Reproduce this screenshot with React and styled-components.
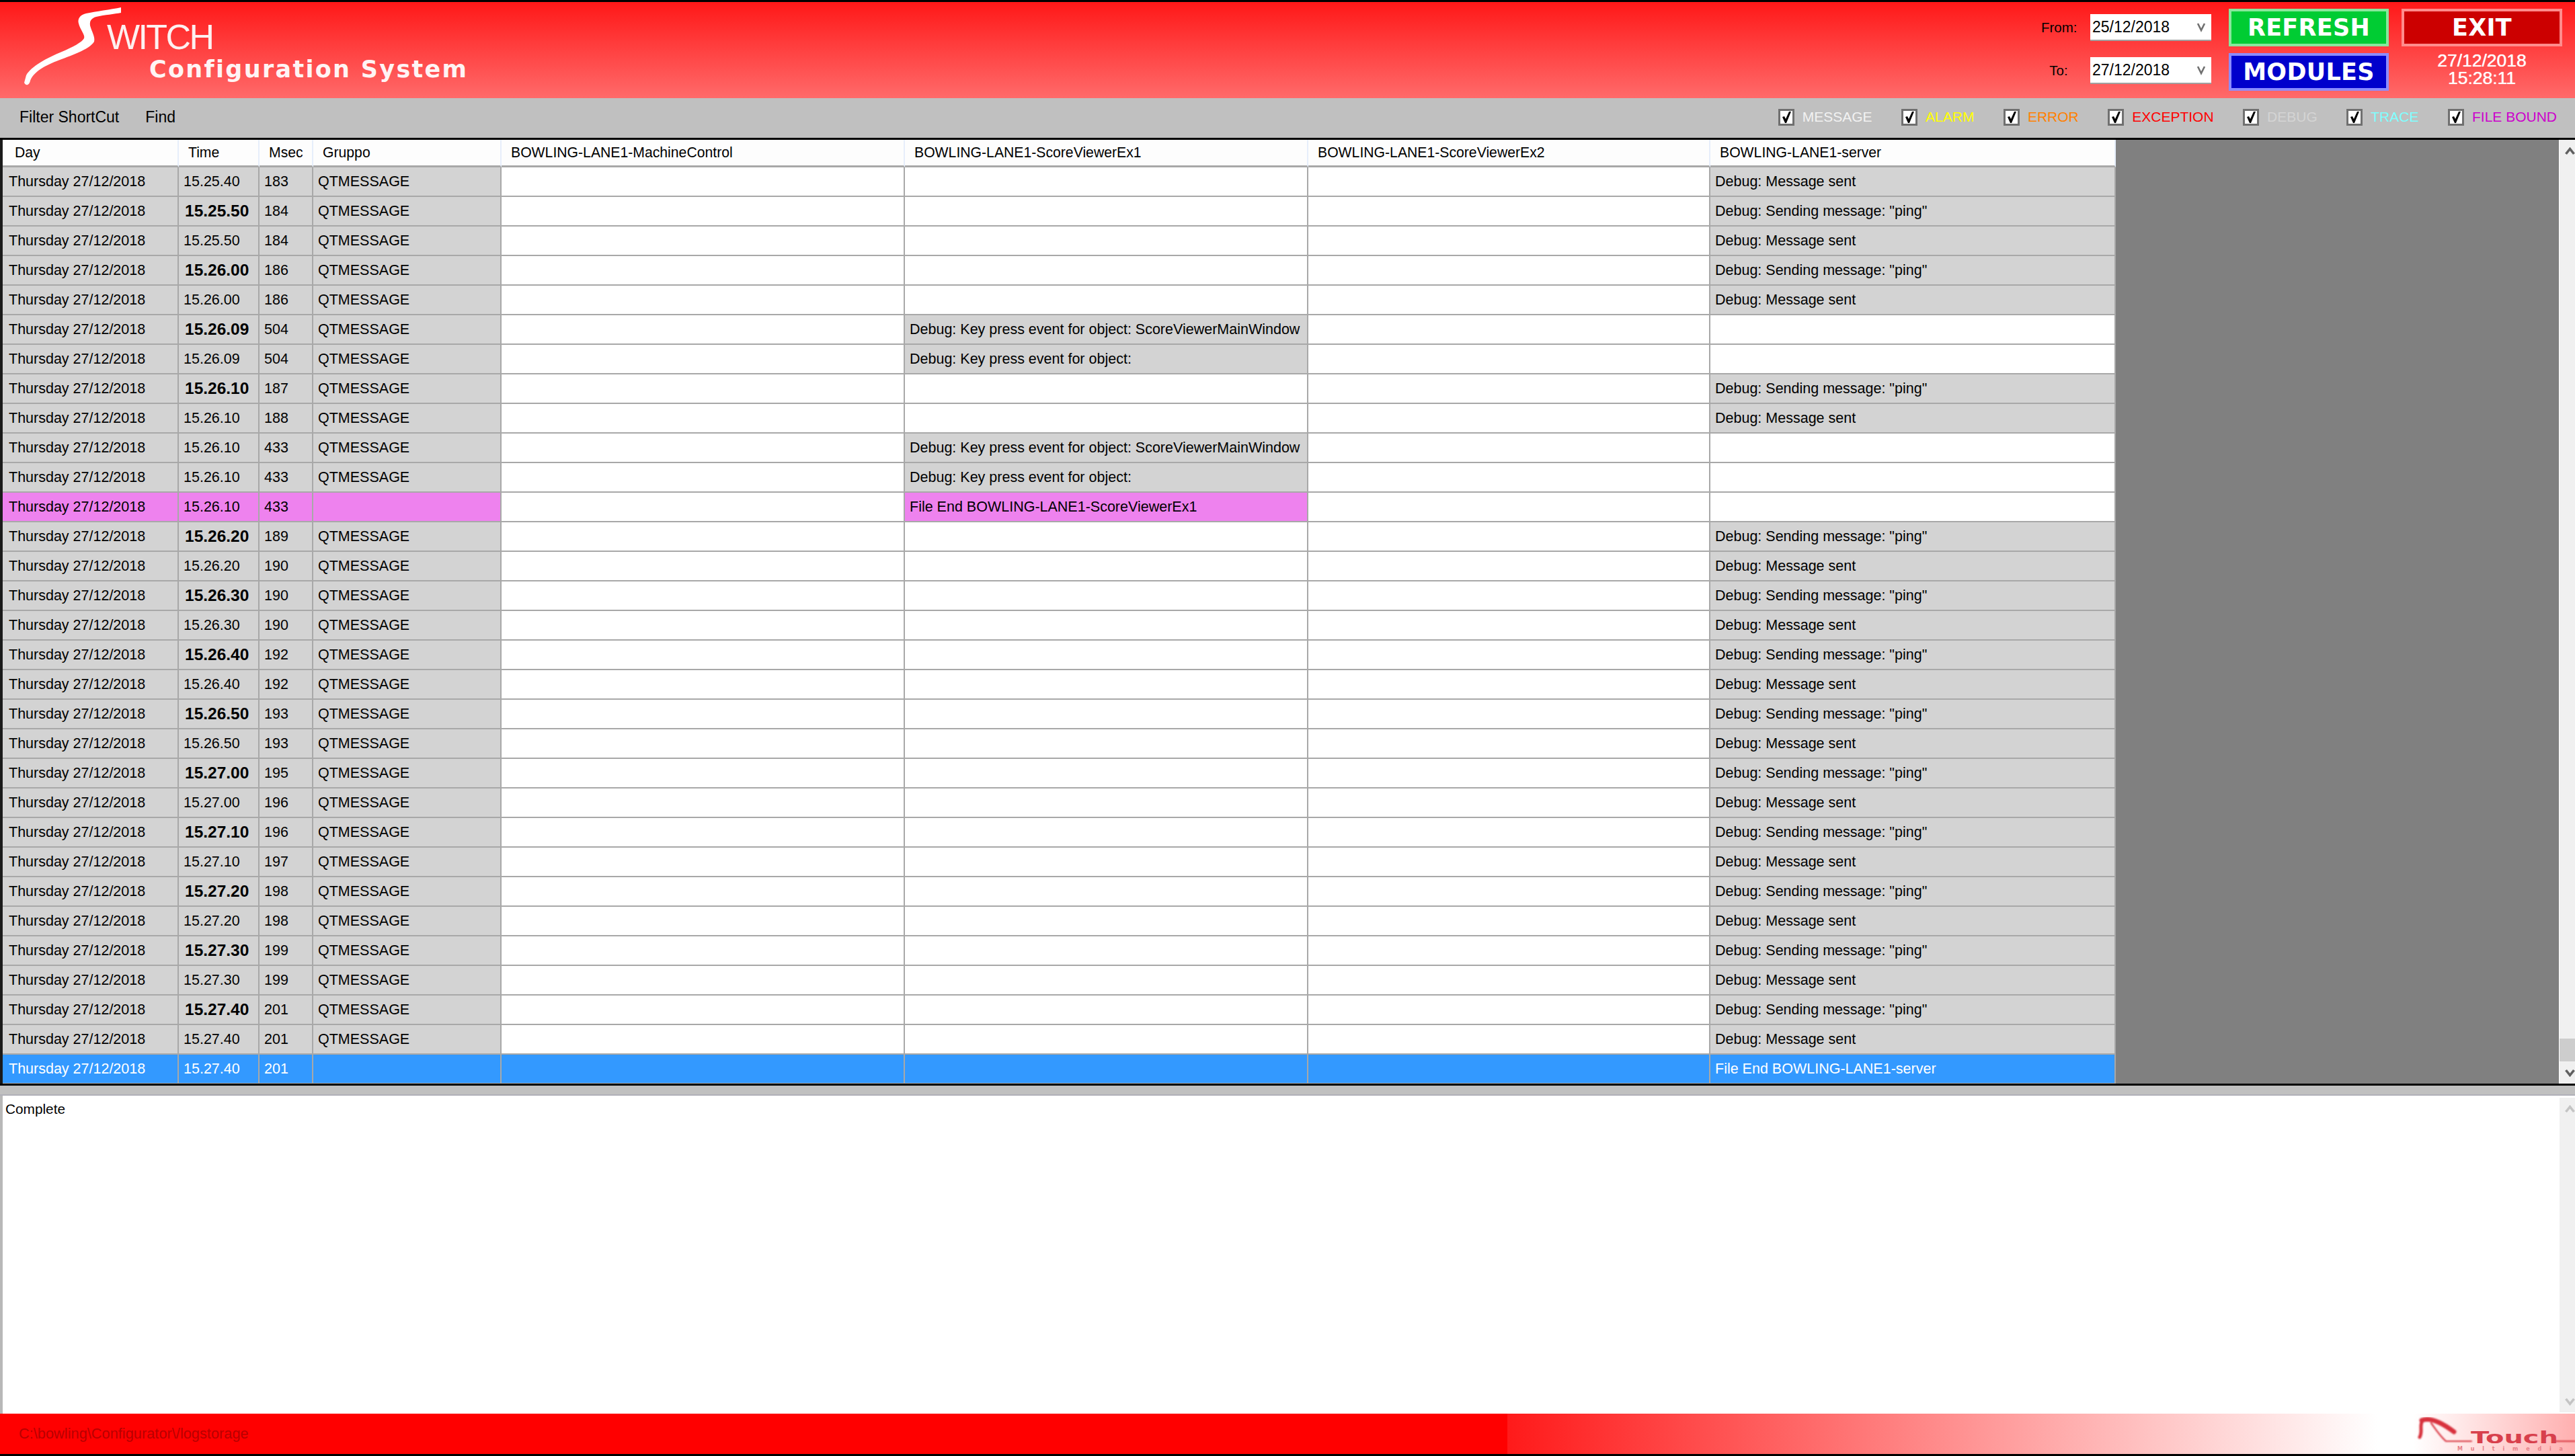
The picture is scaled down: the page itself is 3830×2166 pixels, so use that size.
import React from "react";
import styled, { createGlobalStyle } from "styled-components";

const GlobalStyle = createGlobalStyle`
  html, body {
    margin: 0;
    padding: 0;
    background: #c0c0c0;
    overflow: hidden;
    font-family: "Liberation Sans", Arial, sans-serif;
  }
`;

const COLUMNS = "262px 120px 80px 280px 600px 600px 598px 603px";
const SENT = "Debug: Message sent";
const PING = 'Debug: Sending message: "ping"';
const KEY_MAIN = "Debug: Key press event for object: ScoreViewerMainWindow";
const KEY = "Debug: Key press event for object:";

const rows = [
  { time: "15.25.40", msec: 183, server: SENT },
  { time: "15.25.50", msec: 184, server: PING, bold: true },
  { time: "15.25.50", msec: 184, server: SENT },
  { time: "15.26.00", msec: 186, server: PING, bold: true },
  { time: "15.26.00", msec: 186, server: SENT },
  { time: "15.26.09", msec: 504, viewer: KEY_MAIN, bold: true },
  { time: "15.26.09", msec: 504, viewer: KEY },
  { time: "15.26.10", msec: 187, server: PING, bold: true },
  { time: "15.26.10", msec: 188, server: SENT },
  { time: "15.26.10", msec: 433, viewer: KEY_MAIN },
  { time: "15.26.10", msec: 433, viewer: KEY },
  { time: "15.26.10", msec: 433, viewer: "File End BOWLING-LANE1-ScoreViewerEx1", tone: "bound" },
  { time: "15.26.20", msec: 189, server: PING, bold: true },
  { time: "15.26.20", msec: 190, server: SENT },
  { time: "15.26.30", msec: 190, server: PING, bold: true },
  { time: "15.26.30", msec: 190, server: SENT },
  { time: "15.26.40", msec: 192, server: PING, bold: true },
  { time: "15.26.40", msec: 192, server: SENT },
  { time: "15.26.50", msec: 193, server: PING, bold: true },
  { time: "15.26.50", msec: 193, server: SENT },
  { time: "15.27.00", msec: 195, server: PING, bold: true },
  { time: "15.27.00", msec: 196, server: SENT },
  { time: "15.27.10", msec: 196, server: PING, bold: true },
  { time: "15.27.10", msec: 197, server: SENT },
  { time: "15.27.20", msec: 198, server: PING, bold: true },
  { time: "15.27.20", msec: 198, server: SENT },
  { time: "15.27.30", msec: 199, server: PING, bold: true },
  { time: "15.27.30", msec: 199, server: SENT },
  { time: "15.27.40", msec: 201, server: PING, bold: true },
  { time: "15.27.40", msec: 201, server: SENT },
  { time: "15.27.40", msec: 201, server: "File End BOWLING-LANE1-server", tone: "selected" },
];

const filters = [
  { label: "MESSAGE", color: "#f2f2f2" },
  { label: "ALARM", color: "#ffff00" },
  { label: "ERROR", color: "#ff8000" },
  { label: "EXCEPTION", color: "#ff0000" },
  { label: "DEBUG", color: "#d4d4d4" },
  { label: "TRACE", color: "#80ffff" },
  { label: "FILE BOUND", color: "#cc00cc" },
];

const Page = styled.div`
  width: 3830px;
  height: 2166px;
  display: flex;
  flex-direction: column;
  overflow: hidden;
  background: #c0c0c0;
  border-top: 3px solid #000;
  border-bottom: 3px solid #000;
  box-sizing: border-box;
`;

const Header = styled.header`
  height: 143px;
  flex: none;
  display: flex;
  justify-content: space-between;
  background: linear-gradient(180deg, #ff1818 0%, #ff6a6a 100%);
`;

const Brand = styled.div`
  position: relative;
  padding: 23px 0 0 159px;
  color: #fff;
`;

const Swoosh = styled.svg`
  position: absolute;
  left: 0;
  top: -3px;
  width: 200px;
  height: 143px;
`;

const BrandName = styled.div`
  font-size: 52px;
  line-height: 58px;
  letter-spacing: -2.6px;
  color: #fdf0f0;
`;

const BrandSub = styled.div`
  margin: -1px 0 0 63px;
  font-family: "DejaVu Sans", sans-serif;
  font-weight: 700;
  font-size: 35px;
  line-height: 40px;
  letter-spacing: 2.3px;
  white-space: nowrap;
  color: #fff4f4;
`;

const Controls = styled.div`
  display: flex;
  align-items: flex-start;
  padding: 10px 19px 0 0;
`;

const DateColumn = styled.div`
  display: flex;
  flex-direction: column;
  gap: 24px;
  padding-top: 8px;
  margin-right: 26px;
`;

const DateRow = styled.div`
  display: flex;
  align-items: center;
`;

const DateLabel = styled.span`
  width: 52px;
  margin-right: 21px;
  text-align: center;
  font-size: 20.5px;
  color: #000;
`;

const DateBox = styled.div`
  width: 180px;
  height: 40px;
  box-sizing: border-box;
  display: flex;
  align-items: center;
  justify-content: space-between;
  padding: 0 8px 0 3px;
  background: #fff;
  border-bottom: 2px solid #a0a0a0;
  font-size: 23px;
  color: #000;
`;

const ButtonGrid = styled.div`
  display: grid;
  grid-template-columns: 238px 239px;
  grid-auto-rows: 56px;
  column-gap: 19px;
  row-gap: 10px;
`;

const ActionButton = styled.button`
  box-sizing: border-box;
  margin: 0;
  padding: 0;
  border: 4px solid ${(p) => p.$edge};
  background: ${(p) => p.$fill};
  color: #fff;
  font-family: "DejaVu Sans", sans-serif;
  font-weight: 700;
  font-size: 35px;
  letter-spacing: 0.3px;
`;

const Clock = styled.div`
  text-align: center;
  color: #fff;
  font-size: 26.5px;
  line-height: 26px;
  margin-top: -2px;
  text-shadow: 0 0 1px #fff;
`;

const Toolbar = styled.div`
  height: 59px;
  flex: none;
  display: flex;
  align-items: center;
  justify-content: space-between;
  box-sizing: border-box;
  padding: 0 27px 3px 29px;
  background: #c0c0c0;
`;

const Menu = styled.nav`
  display: flex;
  gap: 39px;
  font-size: 23px;
  color: #000;
`;

const FilterList = styled.div`
  display: flex;
  gap: 43.5px;
`;

const Filter = styled.label`
  display: flex;
  align-items: center;
  gap: 12px;
  font-size: 21px;
  color: ${(p) => p.$color};
`;

const CheckBox = styled.span`
  width: 24px;
  height: 25px;
  box-sizing: border-box;
  display: flex;
  align-items: center;
  justify-content: center;
  background: #fff;
  border: 3px solid #707070;
`;

const GridPanel = styled.div`
  height: 1410px;
  flex: none;
  display: flex;
  box-sizing: border-box;
  border-top: 3px solid #000;
  border-bottom: 3px solid #000;
  background: #808080;
`;

const TableWrap = styled.div`
  flex: 1;
  overflow: hidden;
  border-left: 4px solid #1a1a1a;
`;

const Row = styled.div`
  width: 3143px;
  display: grid;
  grid-template-columns: ${COLUMNS};
  height: ${(p) => (p.$head ? "41px" : "44px")};
`;

const HeadCell = styled.div`
  display: flex;
  align-items: center;
  box-sizing: border-box;
  padding-left: 14px;
  background: #fdfdfd;
  border-right: 2px solid #e6eefb;
  border-bottom: 3px solid #a8a8a8;
  font-size: 21.2px;
  color: #000;
  white-space: nowrap;
  &:first-child {
    padding-left: 18px;
  }
`;

const toneColors = {
  plain: "#fff",
  filled: "#d3d3d3",
  bound: "#ee82ee",
  selected: "#3399ff",
};

const Cell = styled.div`
  display: flex;
  align-items: center;
  box-sizing: border-box;
  padding-left: ${(p) => (p.$bold ? "9px" : "7px")};
  background: ${(p) => toneColors[p.$tone]};
  border-right: 2px solid #a8a8a8;
  border-bottom: 2px solid #a8a8a8;
  font-size: ${(p) => (p.$bold ? "24.5px" : "21.5px")};
  font-weight: ${(p) => (p.$bold ? 700 : 400)};
  color: ${(p) => (p.$tone === "selected" ? "#fff" : "#000")};
  white-space: nowrap;
  overflow: hidden;
  &:first-child {
    padding-left: 9px;
  }
`;

const Scrollbar = styled.div`
  width: 24px;
  flex: none;
  display: flex;
  flex-direction: column;
  overflow: hidden;
  box-sizing: border-box;
  background: #f0f0f0;
  border-left: 1px solid #fff;
  margin-top: ${(p) => (p.$inset ? "3px" : "0")};
  margin-bottom: ${(p) => (p.$inset ? "2px" : "0")};
`;

const ScrollButton = styled.div`
  height: 33px;
  flex: none;
  display: flex;
  align-items: center;
  padding-left: 8px;
  color: ${(p) => (p.$dim ? "#c4c4c4" : "#606060")};
`;

const ScrollThumb = styled.div`
  height: 34px;
  flex: none;
  margin-top: auto;
  background: #cdcdcd;
`;

const ScrollSpacer = styled.div`
  flex: 1;
`;

const Splitter = styled.div`
  height: 15px;
  flex: none;
  box-sizing: border-box;
  background: #c0c0c0;
  border-bottom: 2px solid #b0b0b8;
`;

const LogPanel = styled.div`
  height: 473px;
  flex: none;
  display: flex;
  background: #fff;
  border-left: 4px solid #b8b8b8;
`;

const LogText = styled.div`
  flex: 1;
  padding: 6px 0 0 4px;
  font-size: 20.8px;
  line-height: 28px;
  color: #000;
`;

const Footer = styled.footer`
  flex: 1;
  display: flex;
`;

const PathBar = styled.div`
  width: 2242px;
  display: flex;
  align-items: center;
  padding-left: 28px;
  box-sizing: border-box;
  background: #ff0000;
  color: #b80000;
  font-size: 21.8px;
`;

const FadeBar = styled.div`
  flex: 1;
  background: linear-gradient(90deg, #ff1a1a 0%, #ffffff 96%);
`;

const LogoBox = styled.div`
  width: 240px;
  background: linear-gradient(90deg, #ffffff 0%, #ffb0b0 100%);
`;

const LogoArt = styled.svg`
  display: block;
  width: 240px;
  height: 60px;
`;

function Chevron({ down }) {
  return (
    <svg width="15" height="12" viewBox="0 0 15 12" fill="none">
      <path
        d={down ? "M1.5 2 L7.5 9.5 L13.5 2" : "M1.5 10 L7.5 2.5 L13.5 10"}
        stroke="currentColor"
        strokeWidth="3.6"
      />
    </svg>
  );
}

function SmallChevron() {
  return (
    <svg width="14" height="16" viewBox="0 0 14 16" fill="none">
      <path d="M2 3 L7 13 L12 3" stroke="#707070" strokeWidth="2.6" />
    </svg>
  );
}

function CheckMark() {
  return (
    <svg width="16" height="19" viewBox="0 0 16 19">
      <path d="M2 9 L5 8 L7 12 L12 1 L15 1 L8 18 L6 18 Z" fill="#000" />
    </svg>
  );
}

function VScroll({ inset, dim, thumb }) {
  return (
    <Scrollbar $inset={inset}>
      <ScrollButton $dim={dim}>
        <Chevron />
      </ScrollButton>
      {thumb ? <ScrollThumb /> : <ScrollSpacer />}
      <ScrollButton $dim={dim}>
        <Chevron down />
      </ScrollButton>
    </Scrollbar>
  );
}

function LogRow({ row }) {
  const tone = row.tone;
  const base = tone || "filled";
  const side = (text) => (text ? base : "plain");
  return (
    <Row>
      <Cell $tone={base}>Thursday 27/12/2018</Cell>
      <Cell $tone={base} $bold={row.bold}>
        {row.time}
      </Cell>
      <Cell $tone={base}>{row.msec}</Cell>
      <Cell $tone={base}>{tone ? "" : "QTMESSAGE"}</Cell>
      <Cell $tone={tone === "selected" ? base : "plain"} />
      <Cell $tone={tone === "selected" ? base : side(row.viewer)}>{row.viewer}</Cell>
      <Cell $tone={tone === "selected" ? base : "plain"} />
      <Cell $tone={side(row.server)}>{row.server}</Cell>
    </Row>
  );
}

export default function App() {
  return (
    <>
      <GlobalStyle />
      <Page>
        <Header>
          <Brand>
            <Swoosh viewBox="0 0 200 143">
              <path
                fill="#fff"
                d="M180 11 C165 14 142 17 128 20 C119 22 115 28 117 35 C119 44 127 52 125 57 C122 63 108 70 92 77 C70 86 46 99 39 112 L36 123 C39 129 44 126 45 120 C50 107 66 98 84 91 C104 83 133 74 140 62 C142 55 136 46 134 38 C133 31 136 27 143 25 C156 22 170 21 180 19 Z"
              />
            </Swoosh>
            <BrandName>WITCH</BrandName>
            <BrandSub>Configuration System</BrandSub>
          </Brand>
          <Controls>
            <DateColumn>
              <DateRow>
                <DateLabel>From:</DateLabel>
                <DateBox>
                  25/12/2018
                  <SmallChevron />
                </DateBox>
              </DateRow>
              <DateRow>
                <DateLabel>To:</DateLabel>
                <DateBox>
                  27/12/2018
                  <SmallChevron />
                </DateBox>
              </DateRow>
            </DateColumn>
            <ButtonGrid>
              <ActionButton $fill="#00cc33" $edge="#88e89c">REFRESH</ActionButton>
              <ActionButton $fill="#cc0000" $edge="#ff8c8c">EXIT</ActionButton>
              <ActionButton $fill="#0000cc" $edge="#8c8cff">MODULES</ActionButton>
              <Clock>
                27/12/2018
                <br />
                15:28:11
              </Clock>
            </ButtonGrid>
          </Controls>
        </Header>

        <Toolbar>
          <Menu>
            <span>Filter ShortCut</span>
            <span>Find</span>
          </Menu>
          <FilterList>
            {filters.map((f) => (
              <Filter key={f.label} $color={f.color}>
                <CheckBox>
                  <CheckMark />
                </CheckBox>
                {f.label}
              </Filter>
            ))}
          </FilterList>
        </Toolbar>

        <GridPanel>
          <TableWrap>
            <Row $head>
              <HeadCell>Day</HeadCell>
              <HeadCell>Time</HeadCell>
              <HeadCell>Msec</HeadCell>
              <HeadCell>Gruppo</HeadCell>
              <HeadCell>BOWLING-LANE1-MachineControl</HeadCell>
              <HeadCell>BOWLING-LANE1-ScoreViewerEx1</HeadCell>
              <HeadCell>BOWLING-LANE1-ScoreViewerEx2</HeadCell>
              <HeadCell>BOWLING-LANE1-server</HeadCell>
            </Row>
            {rows.map((row, i) => (
              <LogRow key={i} row={row} />
            ))}
          </TableWrap>
          <VScroll thumb />
        </GridPanel>

        <Splitter />

        <LogPanel>
          <LogText>Complete</LogText>
          <VScroll inset dim />
        </LogPanel>

        <Footer>
          <PathBar>C:\bowling\Configurator\/logstorage</PathBar>
          <FadeBar />
          <LogoBox>
            <LogoArt viewBox="0 0 240 60">
              <defs>
                <filter id="soft">
                  <feGaussianBlur stdDeviation="1.1" />
                </filter>
              </defs>
              <g filter="url(#soft)" fill="none" stroke="#d8303c" strokeLinecap="round">
                <path d="M12 10 C24 5 40 12 60 27" strokeWidth="7" />
                <path d="M13 11 C8 18 14 26 9 35" strokeWidth="5" />
                <path d="M26 14 C32 22 38 32 48 41 L86 41" strokeWidth="2.2" />
                <path d="M210 41 L240 41" strokeWidth="2" />
              </g>
              <text
                x="85"
                y="44"
                textLength="130"
                lengthAdjust="spacingAndGlyphs"
                fontFamily="DejaVu Sans"
                fontWeight="700"
                fontSize="25"
                fill="#d8404c"
              >
                Touch
              </text>
              <text
                x="65"
                y="55"
                textLength="157"
                fontFamily="DejaVu Sans"
                fontWeight="700"
                fontSize="8"
                fill="#e88088"
              >
                Multimedia
              </text>
            </LogoArt>
          </LogoBox>
        </Footer>
      </Page>
    </>
  );
}
